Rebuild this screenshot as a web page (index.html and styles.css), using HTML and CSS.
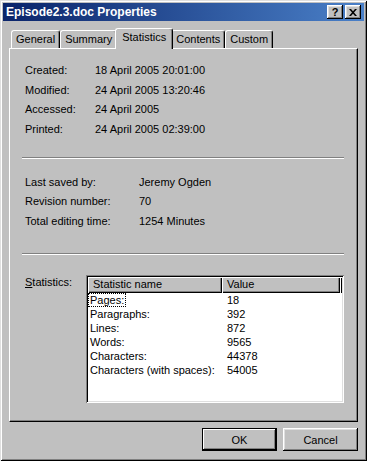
FILE: index.html
```html
<!DOCTYPE html>
<html lang="en">
<head>
    <meta charset="UTF-8">
    <title>Episode2.3.doc Properties</title>
    <link rel="stylesheet" href="styles.css">
</head>
<body>
    <div class="window">
        <div class="titlebar">
            <span class="title">Episode2.3.doc Properties</span>
            <div class="caption-buttons">
                <button class="cap-btn">?</button>
                <button class="cap-btn">
                    <svg width="8" height="7" viewBox="0 0 8 7"><path d="M0 0h2l2 2.3L6 0h2L5 3.5 8 7H6L4 4.7 2 7H0l3-3.5z" fill="#000"/></svg>
                </button>
            </div>
        </div>

        <div class="tabs">
            <div class="tab">General</div>
            <div class="tab">Summary</div>
            <div class="tab active">Statistics</div>
            <div class="tab">Contents</div>
            <div class="tab">Custom</div>
        </div>

        <div class="panel">
            <div class="props dates">
                <span>Created:</span><span>18 April 2005 20:01:00</span>
                <span>Modified:</span><span>24 April 2005 13:20:46</span>
                <span>Accessed:</span><span>24 April 2005</span>
                <span>Printed:</span><span>24 April 2005 02:39:00</span>
            </div>

            <hr class="sep">

            <div class="props editing">
                <span>Last saved by:</span><span>Jeremy Ogden</span>
                <span>Revision number:</span><span>70</span>
                <span>Total editing time:</span><span>1254 Minutes</span>
            </div>

            <hr class="sep sep-last">

            <div class="stats">
                <label class="stats-label"><u>S</u>tatistics:</label>
                <div class="listview">
                    <div class="lv-header">
                        <div class="lv-col col-name">Statistic name</div>
                        <div class="lv-col col-value">Value</div>
                        <div class="lv-col filler"></div>
                    </div>
                    <div class="lv-row"><span class="col-name"><span class="item focus">Pages:</span></span><span class="col-value">18</span></div>
                    <div class="lv-row"><span class="col-name"><span class="item">Paragraphs:</span></span><span class="col-value">392</span></div>
                    <div class="lv-row"><span class="col-name"><span class="item">Lines:</span></span><span class="col-value">872</span></div>
                    <div class="lv-row"><span class="col-name"><span class="item">Words:</span></span><span class="col-value">9565</span></div>
                    <div class="lv-row"><span class="col-name"><span class="item">Characters:</span></span><span class="col-value">44378</span></div>
                    <div class="lv-row"><span class="col-name"><span class="item">Characters (with spaces):</span></span><span class="col-value">54005</span></div>
                </div>
            </div>
        </div>

        <div class="buttons">
            <button class="btn default">OK</button>
            <button class="btn">Cancel</button>
        </div>
    </div>
</body>
</html>
```

FILE: styles.css
```css
:root {
    --face: #c0c0c0;
    --light: #dfdfdf;
    --shadow: #808080;
    --dark: #000;
}

body {
    margin: 0;
    font-family: "Liberation Sans", Arial, sans-serif;
    font-size: 11px;
    color: #000;
    background: var(--face);
}

.window {
    width: 367px;
    height: 461px;
    box-sizing: border-box;
    padding: 3px;
    background: var(--face);
    box-shadow: inset 1px 1px var(--light), inset -1px -1px var(--dark),
                inset 2px 2px #fff, inset -2px -2px var(--shadow);
    display: flex;
    flex-direction: column;
}

/* title bar */
.titlebar {
    height: 18px;
    display: flex;
    align-items: center;
    justify-content: space-between;
    padding: 0 3px 0 3px;
    background: linear-gradient(to right, #0a246a, #4a80c8);
    color: #fff;
    font-weight: bold;
    font-size: 12px;
}

.caption-buttons {
    display: flex;
    gap: 2px;
}

.cap-btn {
    width: 16px;
    height: 14px;
    padding: 0;
    border: 0;
    background: var(--face);
    box-shadow: inset -1px -1px var(--dark), inset 1px 1px #fff,
                inset -2px -2px var(--shadow), inset 2px 2px var(--light);
    display: flex;
    align-items: center;
    justify-content: center;
    font-family: "Liberation Sans", Arial, sans-serif;
    font-weight: bold;
    font-size: 11px;
    line-height: 1;
    color: #000;
}

/* tabs */
.tabs {
    height: 27px;
    display: flex;
    align-items: flex-end;
    padding-left: 8px;
    position: relative;
    z-index: 1;
}

.tab {
    height: 18px;
    box-sizing: border-box;
    padding: 0 4px;
    line-height: 17px;
    background: var(--face);
    border: 1px solid;
    border-color: #fff var(--dark) transparent #fff;
    border-bottom: 0;
    border-radius: 3px 3px 0 0;
    box-shadow: inset -1px 0 var(--shadow);
}

.tab.active {
    height: 21px;
    margin: 0 -2px -1px;
    padding: 0 6px 4px;
    position: relative;
    z-index: 2;
}

/* panel */
.panel {
    height: 374px;
    margin: 0 6px;
    box-sizing: border-box;
    padding: 12px 13px 0 12px;
    border: 1px solid;
    border-color: #fff var(--dark) var(--dark) #fff;
    box-shadow: inset -1px -1px var(--shadow);
}

.props {
    display: grid;
    line-height: 19.67px;
    padding-left: 3px;
}

.dates {
    grid-template-columns: 70px auto;
}

.editing {
    grid-template-columns: 114px auto;
    margin-top: 14px;
}

.sep {
    height: 0;
    margin: 17px 0 0;
    border: 0;
    border-top: 1px solid var(--shadow);
    border-bottom: 1px solid #fff;
}

.sep-last {
    margin-top: 21px;
}

.stats {
    display: flex;
    margin-top: 20px;
    padding-left: 3px;
}

.stats-label {
    width: 61px;
    line-height: 14px;
}

.listview {
    flex: 1;
    height: 128px;
    box-sizing: border-box;
    padding: 2px;
    background: #fff;
    box-shadow: inset 1px 1px var(--shadow), inset -1px -1px #fff,
                inset 2px 2px var(--dark), inset -2px -2px var(--light);
}

.lv-header {
    display: flex;
    height: 16px;
}

.lv-col {
    box-sizing: border-box;
    padding-left: 5px;
    line-height: 15px;
    background: var(--face);
    box-shadow: inset 1px 1px #fff, inset -1px -1px var(--dark),
                inset -2px -2px var(--shadow);
}

.col-name {
    width: 134px;
    flex: none;
}

.col-value {
    width: 118px;
    flex: none;
}

.lv-header .filler {
    flex: 1;
    padding: 0;
}

.lv-row {
    display: flex;
    height: 14px;
    line-height: 12px;
}

.lv-row .col-value {
    padding-left: 5px;
    box-sizing: border-box;
    line-height: 14px;
}

.item {
    display: inline-block;
    height: 14px;
    box-sizing: border-box;
    padding: 0 1px;
    border: 1px solid transparent;
    white-space: nowrap;
}

.item.focus {
    border: 1px dotted #000;
}

/* buttons */
.buttons {
    display: flex;
    justify-content: flex-end;
    gap: 6px;
    margin-top: 6px;
    padding-right: 6px;
}

.btn {
    width: 75px;
    height: 23px;
    padding: 0;
    border: 0;
    background: var(--face);
    font-family: "Liberation Sans", Arial, sans-serif;
    font-size: 11px;
    color: #000;
    box-shadow: inset -1px -1px var(--dark), inset 1px 1px #fff,
                inset -2px -2px var(--shadow), inset 2px 2px var(--light);
}

.btn.default {
    border: 1px solid var(--dark);
    box-shadow: inset -1px -1px var(--dark), inset 1px 1px #fff,
                inset -2px -2px var(--shadow);
}
```
